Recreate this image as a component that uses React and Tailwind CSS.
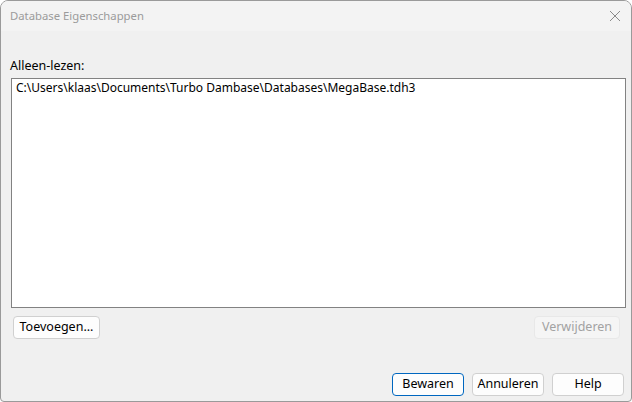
export default function App() {
  return (
    <div
      className="w-[632px] h-[402px] bg-[#f0f0f0] border border-[#9a9a9a] rounded-t-[8px] rounded-b-[4px] overflow-hidden flex flex-col text-[12px] text-black"
      style={{ fontFamily: '"Segoe UI", "Noto Sans", sans-serif' }}
    >
      {/* Title bar */}
      <div className="h-[30px] shrink-0 bg-[#f3f3f3] flex items-center justify-between pl-[9px] pr-[8px]">
        <span className="text-[11.3px] text-[#9b9b9b]">Database Eigenschappen</span>
        <svg width="12" height="12" viewBox="0 0 12 12" className="mr-[2px]">
          <path d="M1 1 L11 11 M11 1 L1 11" stroke="#8a8a8a" strokeWidth="1" />
        </svg>
      </div>

      {/* Body */}
      <div className="flex-1 flex flex-col pl-[10px] pr-[5px] pt-[27px] pb-[5px]">
        <div className="text-[12.5px] leading-[16px] mb-[4px] ml-[-1px]">Alleen-lezen:</div>
        <div className="h-[230px] bg-white border border-[#828282] px-[4px] pt-[1px] leading-[16px]">
          C:\Users\klaas\Documents\Turbo Dambase\Databases\MegaBase.tdh3
        </div>
        <div className="flex justify-between mt-[8px] pl-[2px] pr-[6px] text-[12.5px]">
          <button className="h-[23px] w-[87px] bg-[#fdfdfd] border border-[#d0d0d0] rounded-[4px] leading-none">
            Toevoegen...
          </button>
          <button className="h-[23px] w-[86px] bg-[#f5f5f5] border border-[#e8e8e8] rounded-[4px] text-[#a2a2a2] leading-none">
            Verwijderen
          </button>
        </div>
        <div className="flex-1" />
        <div className="flex justify-end gap-[8px] pr-[2px] text-[12.5px]">
          <button className="h-[23px] w-[72px] bg-[#fdfdfd] border border-[#0067c0] rounded-[4px] leading-none">
            Bewaren
          </button>
          <button className="h-[23px] w-[72px] bg-[#fdfdfd] border border-[#d0d0d0] rounded-[4px] leading-none">
            Annuleren
          </button>
          <button className="h-[23px] w-[72px] bg-[#fdfdfd] border border-[#d0d0d0] rounded-[4px] leading-none">
            Help
          </button>
        </div>
      </div>
    </div>
  );
}
